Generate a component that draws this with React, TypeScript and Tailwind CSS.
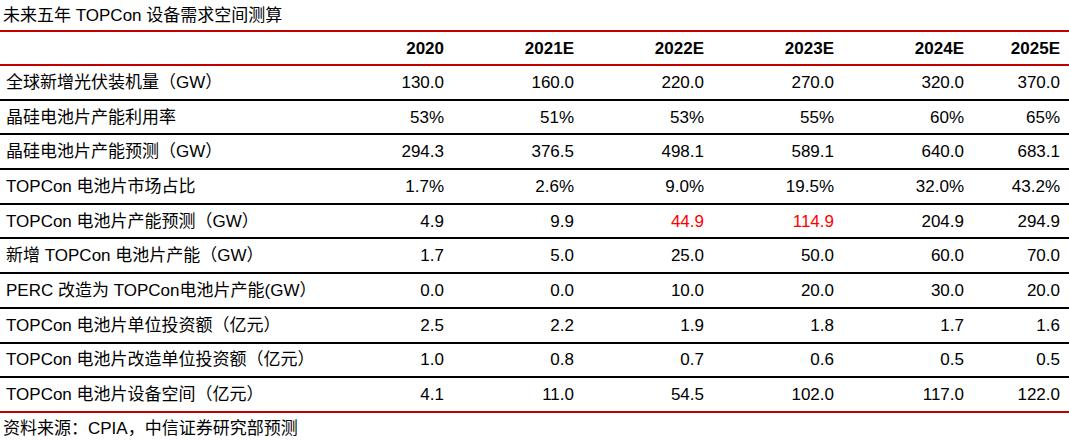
const YEARS = ['2020', '2021E', '2022E', '2023E', '2024E', '2025E'];

type Row = { label: string; values: string[]; red?: number[] };

const ROWS: Row[] = [
  { label: '全球新增光伏装机量（GW）', values: ['130.0', '160.0', '220.0', '270.0', '320.0', '370.0'] },
  { label: '晶硅电池片产能利用率', values: ['53%', '51%', '53%', '55%', '60%', '65%'] },
  { label: '晶硅电池片产能预测（GW）', values: ['294.3', '376.5', '498.1', '589.1', '640.0', '683.1'] },
  { label: 'TOPCon 电池片市场占比', values: ['1.7%', '2.6%', '9.0%', '19.5%', '32.0%', '43.2%'] },
  { label: 'TOPCon 电池片产能预测（GW）', values: ['4.9', '9.9', '44.9', '114.9', '204.9', '294.9'], red: [2, 3] },
  { label: '新增 TOPCon 电池片产能（GW）', values: ['1.7', '5.0', '25.0', '50.0', '60.0', '70.0'] },
  { label: 'PERC 改造为 TOPCon电池片产能(GW）', values: ['0.0', '0.0', '10.0', '20.0', '30.0', '20.0'] },
  { label: 'TOPCon 电池片单位投资额（亿元）', values: ['2.5', '2.2', '1.9', '1.8', '1.7', '1.6'] },
  { label: 'TOPCon 电池片改造单位投资额（亿元）', values: ['1.0', '0.8', '0.7', '0.6', '0.5', '0.5'] },
  { label: 'TOPCon 电池片设备空间（亿元）', values: ['4.1', '11.0', '54.5', '102.0', '117.0', '122.0'] },
];

const GRID = 'grid grid-cols-[320px_130px_130px_130px_130px_130px_1fr] items-center';

export default function App() {
  return (
    <div
      className="w-[1069px] h-[441px] bg-white text-black text-[17px] leading-none"
      style={{ fontFamily: '"Liberation Sans", "Noto Sans CJK SC", sans-serif' }}
    >
      <div className="h-[30px] flex items-center pl-[3px]">未来五年 TOPCon 设备需求空间测算</div>

      <div className={`${GRID} h-[36px] border-y-2 border-[#c00000] font-bold`}>
        <div />
        {YEARS.map((y, i) => (
          <div key={y} className={`text-right ${i === 5 ? 'pr-[9px]' : 'pr-[6px]'}`}>
            {y}
          </div>
        ))}
      </div>

      {ROWS.map((row, r) => (
        <div
          key={row.label}
          className={`${GRID} h-[34.7px] border-b-2 ${r === ROWS.length - 1 ? 'border-[#c00000]' : 'border-black'}`}
        >
          <div className="pl-[6px] whitespace-nowrap">{row.label}</div>
          {row.values.map((v, i) => (
            <div
              key={i}
              className={`text-right ${i === 5 ? 'pr-[9px]' : 'pr-[6px]'} ${row.red?.includes(i) ? 'text-[#ff0000]' : ''}`}
            >
              {v}
            </div>
          ))}
        </div>
      ))}

      <div className="h-[31px] flex items-center pl-[3px]">资料来源：CPIA，中信证券研究部预测</div>
    </div>
  );
}
